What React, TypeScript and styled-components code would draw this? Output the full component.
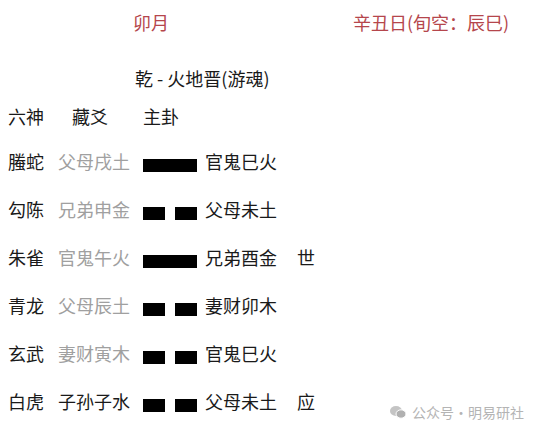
import styled, { createGlobalStyle } from 'styled-components';

const GlobalStyle = createGlobalStyle`
  body {
    margin: 0;
    background: #fff;
    font-family: "Noto Sans CJK SC", "Noto Sans", sans-serif;
    color: #1a1a1a;
  }
`;

type Yao = {
  god: string;
  hidden: string;
  hiddenDim: boolean;
  yang: boolean;
  main: string;
  mark?: string;
};

const rows: Yao[] = [
  { god: '螣蛇', hidden: '父母戌土', hiddenDim: true, yang: true, main: '官鬼巳火' },
  { god: '勾陈', hidden: '兄弟申金', hiddenDim: true, yang: false, main: '父母未土' },
  { god: '朱雀', hidden: '官鬼午火', hiddenDim: true, yang: true, main: '兄弟酉金', mark: '世' },
  { god: '青龙', hidden: '父母辰土', hiddenDim: true, yang: false, main: '妻财卯木' },
  { god: '玄武', hidden: '妻财寅木', hiddenDim: true, yang: false, main: '官鬼巳火' },
  { god: '白虎', hidden: '子孙子水', hiddenDim: false, yang: false, main: '父母未土', mark: '应' },
];

function App() {
  return (
    <Page>
      <GlobalStyle />
      <TopRow>
        <Month>卯月</Month>
        <Day>辛丑日(旬空：辰巳)</Day>
      </TopRow>
      <Title>乾 - 火地晋(游魂)</Title>
      <HeaderRow>
        <span>六神</span>
        <HeaderHidden>藏爻</HeaderHidden>
        <span>主卦</span>
      </HeaderRow>
      <Rows>
        {rows.map((r, i) => (
          <Row key={i}>
            <span>{r.god}</span>
            <Hidden dim={r.hiddenDim}>{r.hidden}</Hidden>
            <Bars>
              {r.yang ? (
                <Bar width={54} />
              ) : (
                <>
                  <Bar width={22} />
                  <Bar width={22} />
                </>
              )}
            </Bars>
            <span>{r.main}</span>
            <span>{r.mark}</span>
          </Row>
        ))}
      </Rows>
      <Watermark>
        <svg width="16" height="14" viewBox="0 0 16 14">
          <ellipse cx="6" cy="6" rx="6" ry="5" fill="#c4c4c4" />
          <ellipse cx="11" cy="9" rx="5" ry="4.2" fill="#b0b0b0" stroke="#fff" strokeWidth="1" />
        </svg>
        <span>公众号·明易研社</span>
      </Watermark>
    </Page>
  );
}

const Page = styled.div`
  position: relative;
  width: 554px;
  height: 433px;
  padding-left: 8px;
  box-sizing: border-box;
  font-size: 18px;
`;

const TopRow = styled.div`
  display: flex;
  height: 44px;
  align-items: center;
  color: #b5464c;
`;

const Month = styled.span`
  margin-left: 125px;
`;

const Day = styled.span`
  margin-left: 184px;
`;

const Title = styled.div`
  margin-top: 14px;
  height: 40px;
  line-height: 40px;
  padding-left: 127px;
`;

const Grid = styled.div`
  display: grid;
  grid-template-columns: 50px 85px 62px 92px auto;
  align-items: center;
`;

const HeaderRow = styled(Grid)`
  height: 36px;
`;

const HeaderHidden = styled.span`
  padding-left: 14px;
`;

const Rows = styled.div`
  margin-top: 3px;
`;

const Row = styled(Grid)`
  height: 48px;
`;

const Hidden = styled.span<{ dim: boolean }>`
  color: ${(p) => (p.dim ? '#a0a0a0' : '#1a1a1a')};
`;

const Bars = styled.div`
  display: flex;
  gap: 10px;
  height: 13px;
  margin-top: 9px;
`;

const Bar = styled.div<{ width: number }>`
  width: ${(p) => p.width}px;
  height: 13px;
  background: #000;
`;

const Watermark = styled.div`
  position: absolute;
  left: 390px;
  top: 402px;
  display: flex;
  align-items: center;
  gap: 6px;
  font-size: 14px;
  color: #b4b4b4;
`;

export default App;
